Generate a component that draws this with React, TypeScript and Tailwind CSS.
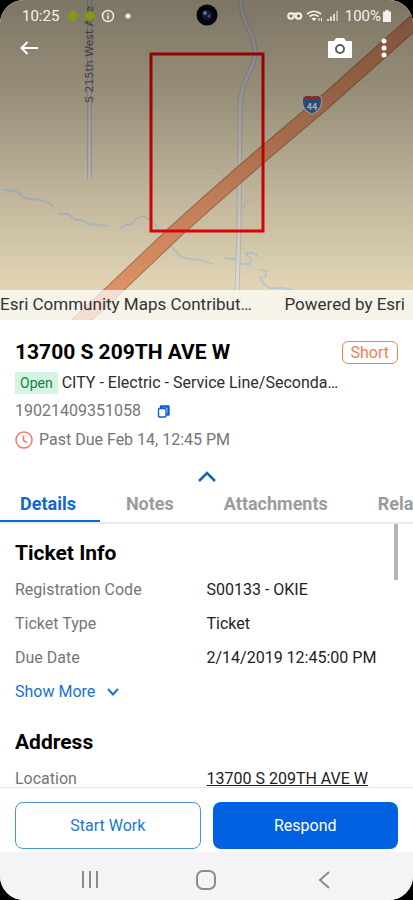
import { useState } from "react";
import { clsx } from "clsx";

const tabs = ["Details", "Notes", "Attachments", "Related"];

const ticketInfo = [
  { label: "Registration Code", value: "S00133 - OKIE" },
  { label: "Ticket Type", value: "Ticket" },
  { label: "Due Date", value: "2/14/2019 12:45:00 PM" },
];

const interstate = "M420 17 L327 100 L262 155 L239 175 L206 204 L176 231 L116 288 L72 329";
const sideRoad = "M241 0 C241 26 255 30 255 52 C255 72 240 78 240 108 L239 230 L237 292";

const MapCanvas = () => (
  <svg
    className="absolute inset-0 h-full w-full"
    viewBox="0 0 413 320"
    preserveAspectRatio="xMidYMid slice"
    aria-hidden="true"
  >
    <defs>
      <linearGradient id="shade" x1="0" y1="0" x2="0" y2="1">
        <stop offset="0" stopColor="#000" stopOpacity="0.46" />
        <stop offset="0.3" stopColor="#000" stopOpacity="0.34" />
        <stop offset="0.62" stopColor="#000" stopOpacity="0.16" />
        <stop offset="0.9" stopColor="#000" stopOpacity="0.02" />
      </linearGradient>
    </defs>
    <rect width="413" height="320" fill="#e6d9b9" />

    {/* creeks */}
    <g fill="none" stroke="#bccdd0" strokeWidth="1.8" strokeLinejoin="round">
      <path d="M4 190 L16 191 L24 198 L40 200 L49 203 L54 208" />
      <path d="M59 214 L68 214 L75 220 L82 220 L88 224 L98 225 L108 226" />
      <path d="M120 229 L125 225 L132 224 L137 218 L143 216 L152 221 L158 228" />
      <path d="M171 246 L181 257 L190 259 L200 260 L214 264" />
      <path d="M224 258 L234 259 L242 264 L250 264 L251 260 L246 253 L252 253 L258 256" />
      <path d="M259 269 L266 271 L266 276 L260 278 L264 284 L270 288 L282 288 L294 290" />
    </g>
    <path
      d="M196 135 L206 134 M211 168 L220 169 M250 199 Q244 202 244 208"
      fill="none"
      stroke="#d0cbc0"
      strokeWidth="1.2"
    />

    {/* local roads */}
    <path d="M89.500 0 V180" stroke="#c2bdb2" strokeWidth="5" />
    <path d="M89.500 0 V180" stroke="#dcd9d6" strokeWidth="3" />
    <path d={sideRoad} fill="none" stroke="#c6c1b8" strokeWidth="5" />
    <path d={sideRoad} fill="none" stroke="#e2e0e0" strokeWidth="3" />
    <text
      transform="translate(93 103) rotate(-90)"
      fontFamily="DejaVu Sans, sans-serif"
      fontSize="11"
      fill="#6e685c"
      stroke="#d8d0bc"
      strokeWidth="1"
      paintOrder="stroke"
    >
      S 215th West Ave
    </text>

    {/* interstate */}
    <path d={interstate} fill="none" stroke="#a8784f" strokeWidth="15" strokeLinejoin="round" />
    <path d={interstate} fill="none" stroke="#e39468" strokeWidth="13" strokeLinejoin="round" />
    <path
      d="M303 97 Q307 94 312 96 Q317 94 321 97 Q324 109 312 114 Q300 109 303 97 Z"
      fill="#3b6fa8"
      stroke="#d9d9e2"
      strokeWidth="1.300"
    />
    <path d="M304 97 Q308 95 312 97 Q316 95 320 97 L321 100 H303 Z" fill="#c9433a" />
    <text
      x="312"
      y="110"
      textAnchor="middle"
      fontFamily="Roboto, sans-serif"
      fontSize="9"
      fontWeight="700"
      fill="#fff"
    >
      44
    </text>

    <rect x="151" y="54" width="112" height="177" fill="none" stroke="#f00505" strokeWidth="3" />
    <rect width="413" height="320" fill="url(#shade)" />
  </svg>
);

const StatusBar = () => (
  <div className="relative flex h-8 items-center justify-between pr-[22px] pl-[22px] text-[15px] text-[#f3f1e8]">
    <div className="flex items-center gap-2">
      <span>10:25</span>
      <svg width="80" height="14" viewBox="0 0 80 14" aria-hidden="true">
        <path d="M6 1 L12 7 L6 13 L0 7 Z M23 1 L29 7 L23 13 L17 7 Z" fill="#7f9c12" />
        <circle cx="41" cy="7" r="5.500" fill="none" stroke="currentColor" strokeWidth="1.400" />
        <path d="M41 4 V5.500 M41 6.500 V10" stroke="currentColor" strokeWidth="1.500" />
        <circle cx="61" cy="7" r="2.500" fill="currentColor" />
      </svg>
    </div>
    {/* front camera */}
    <svg className="absolute top-1 left-1/2 -translate-x-1/2" width="22" height="22" viewBox="0 0 22 22" aria-hidden="true">
      <circle cx="11" cy="11" r="10.500" fill="#050508" />
      <circle cx="11" cy="11" r="5" fill="#15182c" />
      <circle cx="9" cy="9" r="2" fill="#4a78b8" />
      <circle cx="13" cy="12" r="1.500" fill="#5a3fa0" />
    </svg>
    <div className="flex items-center gap-1.5">
      <svg width="52" height="14" viewBox="0 0 52 14" aria-hidden="true">
        <circle cx="4" cy="7" r="2.800" fill="none" stroke="currentColor" strokeWidth="2" />
        <circle cx="11.500" cy="7" r="2.800" fill="none" stroke="currentColor" strokeWidth="2" />
        <path d="M4 4.500 H11" stroke="currentColor" strokeWidth="1.600" />
        <g fill="none" stroke="currentColor" strokeWidth="1.700">
          <path d="M20 5 Q27 -0.500 34 5" />
          <path d="M22.500 7.500 Q27 4 31.500 7.500" />
        </g>
        <path d="M24.500 9.500 Q27 8 29.500 9.500 L27 12 Z" fill="currentColor" />
        <path d="M32 9 V12 M34.500 9 V12" stroke="currentColor" />
        <path d="M41 12 V10 M44 12 V7.500 M47 12 V5" stroke="currentColor" strokeWidth="2" opacity="0.8" />
        <path d="M50 12 V2" stroke="currentColor" strokeWidth="2" opacity="0.5" />
      </svg>
      <div className="flex items-center gap-0.5">
        <span>100%</span>
        <svg width="8" height="12" viewBox="0 0 8 12" aria-hidden="true">
          <path d="M2.500 0 H5.500 V1.500 H8 V12 H0 V1.500 H2.500 Z" fill="currentColor" />
        </svg>
      </div>
    </div>
  </div>
);

const MapHeader = () => (
  <section className="relative flex h-80 shrink-0 flex-col overflow-hidden">
    <MapCanvas />
    <StatusBar />
    <div className="relative flex h-8 items-center justify-between pr-[22px] pl-5 text-white">
      <button type="button" aria-label="Back">
        <svg width="18" height="14" viewBox="0 0 18 14" fill="none" stroke="currentColor" strokeWidth="2">
          <path d="M18 7 H1.500 M7.500 1 L1.500 7 L7.500 13" />
        </svg>
      </button>
      <div className="flex items-center gap-6">
        <button type="button" aria-label="Take photo">
          <svg width="26" height="22" viewBox="0 0 26 22">
            <path d="M2 4 H7 L9 1 H17 L19 4 H24 Q25 4 25 5 V20 Q25 21 24 21 H2 Q1 21 1 20 V5 Q1 4 2 4 Z" fill="currentColor" />
            <circle cx="13" cy="12" r="4" fill="#fff" stroke="#5f5d55" strokeWidth="2" />
          </svg>
        </button>
        <button type="button" aria-label="More options" className="px-1">
          <svg width="6" height="20" viewBox="0 0 6 20" fill="currentColor">
            <circle cx="3" cy="3" r="2.500" />
            <circle cx="3" cy="10" r="2.500" />
            <circle cx="3" cy="17" r="2.500" />
          </svg>
        </button>
      </div>
    </div>
    <div className="relative mt-auto flex h-[30px] items-center justify-between gap-6 bg-white/70 pr-2 text-[17px] text-[#333]">
      <span className="truncate">Esri Community Maps Contributors</span>
      <span className="shrink-0">Powered by Esri</span>
    </div>
  </section>
);

const TicketSummary = () => (
  <section className="flex shrink-0 flex-col px-[15px] pt-5">
    <div className="flex items-center justify-between">
      <h1 className="text-[21px] leading-6 font-bold text-black">13700 S 209TH AVE W</h1>
      <span className="rounded-md border border-[#f0814f] px-2 text-base leading-[21px] text-[#f0814f]">Short</span>
    </div>
    <div className="mt-2 flex items-center gap-1 pr-14">
      <span className="bg-[#d5f5e3] px-[5px] text-sm leading-[22px] text-[#1c7a45]">Open</span>
      <span className="truncate text-base leading-[22px] text-[#2c2c2c]">
        CITY - Electric - Service Line/Secondary Line
      </span>
    </div>
    <div className="mt-[5px] flex items-center gap-4 text-base text-[#757575]">
      <span>19021409351058</span>
      <button type="button" aria-label="Copy ticket number" className="text-[#0a5fd6]">
        <svg width="13" height="13" viewBox="0 0 13 13" fill="none" stroke="currentColor">
          <path d="M4 3.500 V1.500 H11.500 V9.500 H9.500" strokeWidth="2.400" strokeLinejoin="round" />
          <rect x="1.500" y="3.500" width="7.500" height="8.500" rx="1" strokeWidth="1.400" />
        </svg>
      </button>
    </div>
    <div className="mt-[5px] flex items-center gap-1.5 text-base text-[#757575]">
      <svg width="18" height="18" viewBox="0 0 18 18" fill="none" stroke="#ef7d63" strokeWidth="1.500" aria-hidden="true">
        <circle cx="9" cy="9" r="8" />
        <path d="M8.500 4.500 V9.500 L12 11.500" />
      </svg>
      <span>Past Due Feb 14, 12:45 PM</span>
    </div>
  </section>
);

const InfoRow = ({ label, value, link }: { label: string; value: string; link?: boolean }) => (
  <div className="grid grid-cols-2 text-base leading-[34px]">
    <dt className="text-[#757575]">{label}</dt>
    <dd className="text-[#222]">
      {link ? (
        <a href="#location" className="underline">
          {value}
        </a>
      ) : (
        value
      )}
    </dd>
  </div>
);

const PhoneNav = () => (
  <nav className="grid h-12 shrink-0 grid-cols-3 justify-items-center bg-[#f4f3f6] px-8 pt-2 text-[#8b8b8e]">
    <button type="button" aria-label="Recent apps">
      <svg width="20" height="20" viewBox="0 0 20 20" stroke="currentColor" strokeWidth="2">
        <path d="M3 1 V18 M10 1 V18 M17 1 V18" />
      </svg>
    </button>
    <button type="button" aria-label="Home">
      <svg width="20" height="20" viewBox="0 0 20 20" fill="none" stroke="currentColor" strokeWidth="2">
        <rect x="1" y="1" width="18" height="18" rx="6" />
      </svg>
    </button>
    <button type="button" aria-label="Back">
      <svg width="20" height="20" viewBox="0 0 20 20" fill="none" stroke="currentColor" strokeWidth="2">
        <path d="M16 2 L7 10 L16 18" />
      </svg>
    </button>
  </nav>
);

export default function App() {
  const [activeTab, setActiveTab] = useState("Details");

  return (
    <div className="h-screen bg-black font-[Roboto,sans-serif]">
      <div className="flex h-full flex-col overflow-hidden rounded-3xl bg-white">
        <MapHeader />
        <TicketSummary />

        <button
          type="button"
          aria-label="Collapse summary"
          className="mt-3.5 flex h-5 shrink-0 items-center justify-center text-[#1263c8]"
        >
          <svg width="18" height="11" viewBox="0 0 18 11" fill="none" stroke="currentColor" strokeWidth="2.500">
            <path d="M1 10 L9 2 L17 10" />
          </svg>
        </button>

        <div role="tablist" className="flex shrink-0 gap-0.5 overflow-hidden border-b-2 border-[#e9ebec]">
          {tabs.map((tab) => (
            <button
              key={tab}
              type="button"
              role="tab"
              aria-selected={activeTab === tab}
              onClick={() => setActiveTab(tab)}
              className={clsx(
                "h-9 shrink-0 border-b-2 px-6 pt-0.5 text-lg font-bold whitespace-nowrap first:pl-5",
                activeTab === tab ? "border-[#1467cf] text-[#1467cf]" : "border-transparent text-[#9b9b9b]"
              )}
            >
              {tab}
            </button>
          ))}
        </div>

        <main className="relative min-h-0 flex-1 overflow-hidden px-[15px] pt-[15px]">
          <div className="absolute top-0 right-[15px] h-14 w-1 bg-[#b4b4b4]" />
          <h2 className="text-[21px] leading-7 font-bold text-black">Ticket Info</h2>
          <dl className="mt-1.5">
            {ticketInfo.map((row) => (
              <InfoRow key={row.label} label={row.label} value={row.value} />
            ))}
          </dl>
          <button type="button" className="flex h-[34px] items-center gap-3 text-base text-[#1971d4]">
            Show More
            <svg width="12" height="8" viewBox="0 0 12 8" fill="none" stroke="currentColor" strokeWidth="2">
              <path d="M1 1 L6 6.500 L11 1" />
            </svg>
          </button>
          <h2 className="mt-[19px] text-[21px] leading-7 font-bold text-black">Address</h2>
          <dl className="mt-1.5">
            <InfoRow label="Location" value="13700 S 209TH AVE W" link />
          </dl>
        </main>

        <footer className="grid shrink-0 grid-cols-2 gap-3 border-t border-[#e0e2e4] px-[15px] pt-3.5 pb-[3px] text-base">
          <button type="button" className="h-[47px] rounded-lg border border-[#4c93dd] bg-white text-[#2277d6]">
            Start Work
          </button>
          <button type="button" className="h-[47px] rounded-lg bg-[#0062e0] text-white">
            Respond
          </button>
        </footer>
        <PhoneNav />
      </div>
    </div>
  );
}
